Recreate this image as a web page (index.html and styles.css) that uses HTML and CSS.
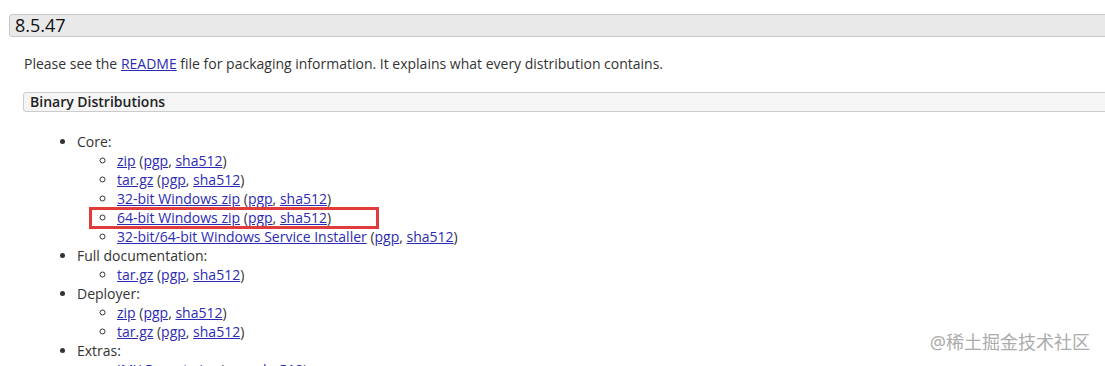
FILE: index.html
```html
<!DOCTYPE html>
<html lang="en">
<head>
    <meta charset="UTF-8">
    <title>Apache Tomcat 8 Software Downloads</title>
    <link rel="stylesheet" href="styles.css">
</head>
<body>
    <div class="content">
        <h3 class="version">8.5.47</h3>
        <p class="intro">Please see the <a href="#">README</a> file for packaging information. It explains what every distribution contains.</p>

        <h4 class="subsection">Binary Distributions</h4>
        <ul class="dist-list">
            <li>Core:
                <ul>
                    <li><a href="#">zip</a> (<a href="#">pgp</a>, <a href="#">sha512</a>)</li>
                    <li><a href="#">tar.gz</a> (<a href="#">pgp</a>, <a href="#">sha512</a>)</li>
                    <li><a href="#">32-bit Windows zip</a> (<a href="#">pgp</a>, <a href="#">sha512</a>)</li>
                    <li><a href="#">64-bit Windows zip</a> (<a href="#">pgp</a>, <a href="#">sha512</a>)</li>
                    <li><a href="#">32-bit/64-bit Windows Service Installer</a> (<a href="#">pgp</a>, <a href="#">sha512</a>)</li>
                </ul>
            </li>
            <li>Full documentation:
                <ul>
                    <li><a href="#">tar.gz</a> (<a href="#">pgp</a>, <a href="#">sha512</a>)</li>
                </ul>
            </li>
            <li>Deployer:
                <ul>
                    <li><a href="#">zip</a> (<a href="#">pgp</a>, <a href="#">sha512</a>)</li>
                    <li><a href="#">tar.gz</a> (<a href="#">pgp</a>, <a href="#">sha512</a>)</li>
                </ul>
            </li>
            <li>Extras:
                <ul>
                    <li><a href="#">JMX Remote jar</a> (<a href="#">pgp</a>, <a href="#">sha512</a>)</li>
                </ul>
            </li>
        </ul>
    </div>

    <!-- рамка-выделение поверх скриншота -->
    <div class="highlight"></div>

    <div class="watermark">@稀土掘金技术社区</div>
</body>
</html>
```

FILE: styles.css
```css
body {
    margin: 0;
    font-family: "Open Sans", "Noto Sans", sans-serif;
    font-size: 14px;
    color: #333;
    background: #fff;
    overflow: hidden;
    position: relative;
    height: 366px;
}

a {
    color: #2b2bb4;
    text-decoration: underline;
}

.content {
    padding-top: 14px;
}

.version {
    margin: 0 0 0 9px;
    width: 1200px;
    height: 21px;
    line-height: 21px;
    padding: 0 5px;
    font-size: 18px;
    font-weight: normal;
    color: #111;
    background: #e9e9e9;
    border: 1px solid #c8c8c8;
    border-radius: 3px;
}

.intro {
    margin: 17px 0 0 24px;
    line-height: 19px;
}

.subsection {
    margin: 19px 0 0 23px;
    width: 1200px;
    height: 18px;
    line-height: 18px;
    padding-left: 6px;
    font-size: 14px;
    font-weight: 600;
    color: #222;
    background: #f5f5f5;
    border: 1px solid #cccccc;
    border-radius: 3px;
}

.dist-list {
    margin: 20px 0 0 37px;
    padding-left: 40px;
    list-style: disc;
    line-height: 19px;
}

.dist-list ul {
    margin: 0;
    padding-left: 40px;
    list-style: circle;
}

.highlight {
    position: absolute;
    left: 89px;
    top: 207px;
    width: 290px;
    height: 22px;
    box-sizing: border-box;
    border: 3px solid #e23b3b;
}

.watermark {
    position: absolute;
    right: 15px;
    top: 330px;
    font-family: "Noto Sans", "Noto Sans CJK SC", sans-serif;
    font-size: 18px;
    line-height: 24px;
    color: #acacac;
}
```
